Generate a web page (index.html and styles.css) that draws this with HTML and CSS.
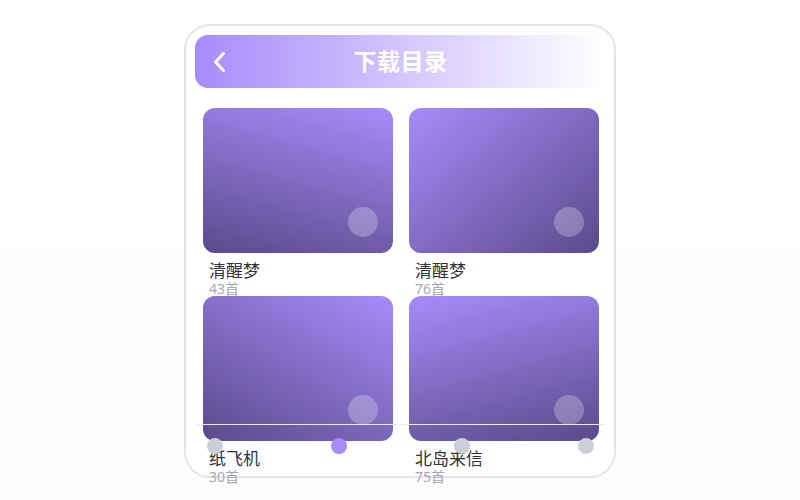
FILE: index.html
```html
<!DOCTYPE html>
<html lang="zh">
<head>
<meta charset="utf-8">
<link rel="stylesheet" href="styles.css">
</head>
<body>
<div class="phone">
  <header class="topbar">
    <span class="back">
      <svg width="14" height="22" viewBox="0 0 14 22"><path d="M11.5 2.5 L3.5 11 L11.5 19.5" fill="none" stroke="#fff" stroke-width="3" stroke-linecap="round" stroke-linejoin="round"/></svg>
    </span>
    <h1 class="title">下载目录</h1>
    <span></span>
  </header>
  <main class="grid">
    <div class="item">
      <div class="cover" style="background: linear-gradient(195deg, #a78bfa, #5b4a8b);"><span class="dot"></span></div>
      <div class="name">清醒梦</div>
      <div class="count">43首</div>
    </div>
    <div class="item">
      <div class="cover" style="background: linear-gradient(140deg, #a78bfa, #5b4a8b);"><span class="dot"></span></div>
      <div class="name">清醒梦</div>
      <div class="count">76首</div>
    </div>
    <div class="item">
      <div class="cover" style="background: linear-gradient(210deg, #a78bfa, #5b4a8b);"><span class="dot"></span></div>
      <div class="name">纸飞机</div>
      <div class="count">30首</div>
    </div>
    <div class="item">
      <div class="cover" style="background: linear-gradient(165deg, #a78bfa, #5b4a8b);"><span class="dot"></span></div>
      <div class="name">北岛来信</div>
      <div class="count">75首</div>
    </div>
  </main>
  <nav class="tabbar">
    <span class="tab"></span>
    <span class="tab active"></span>
    <span class="tab"></span>
    <span class="tab"></span>
  </nav>
</div>
</body>
</html>
```
FILE: styles.css
```css
html, body {
  margin: 0;
  padding: 0;
}
body {
  width: 800px;
  height: 500px;
  background: linear-gradient(#ffffff 0 250px, #fdfdfd 250px);
  font-family: "Noto Sans", "Noto Sans CJK SC", sans-serif;
  overflow: hidden;
}
.phone {
  position: relative;
  box-sizing: border-box;
  width: 432px;
  height: 454px;
  margin: 24px auto 0;
  border: 2px solid #e6e6ea;
  border-radius: 26px;
  background: #fff;
  padding: 9px 8px 0 9px;
}
.topbar {
  height: 53px;
  border-radius: 13px;
  background: linear-gradient(to right, #a78bfa, #ffffff);
  display: grid;
  grid-template-columns: 1fr auto 1fr;
  align-items: center;
}
.back {
  display: flex;
  align-items: center;
  padding-left: 17px;
}
.title {
  margin: 0;
  color: #fff;
  font-size: 23px;
  font-weight: 700;
  letter-spacing: 0.5px;
  line-height: 1;
}
.grid {
  margin: 20px 0 0 8px;
  width: 396px;
  display: grid;
  grid-template-columns: 190px 190px;
  column-gap: 16px;
  grid-auto-rows: 188px;
}
.item {
  display: flex;
  flex-direction: column;
}
.cover {
  position: relative;
  height: 145px;
  border-radius: 12px;
  flex: none;
}
.dot {
  position: absolute;
  right: 15px;
  bottom: 16px;
  width: 30px;
  height: 30px;
  border-radius: 50%;
  background: rgba(255, 255, 255, 0.25);
}
.name {
  margin: 8px 0 0 6px;
  font-size: 17px;
  line-height: 20px;
  color: #333;
}
.count {
  margin-left: 6px;
  font-size: 14px;
  line-height: 16px;
  color: #a4a8b0;
}
.tabbar {
  position: absolute;
  left: 10px;
  right: 9px;
  top: 398px;
  border-top: 1px solid #ececf0;
  padding: 13px 11px 0;
  display: flex;
  justify-content: space-between;
}
.tab {
  width: 16px;
  height: 16px;
  border-radius: 50%;
  background: #cbd0d6;
}
.tab.active {
  background: #a78bfa;
}
```
